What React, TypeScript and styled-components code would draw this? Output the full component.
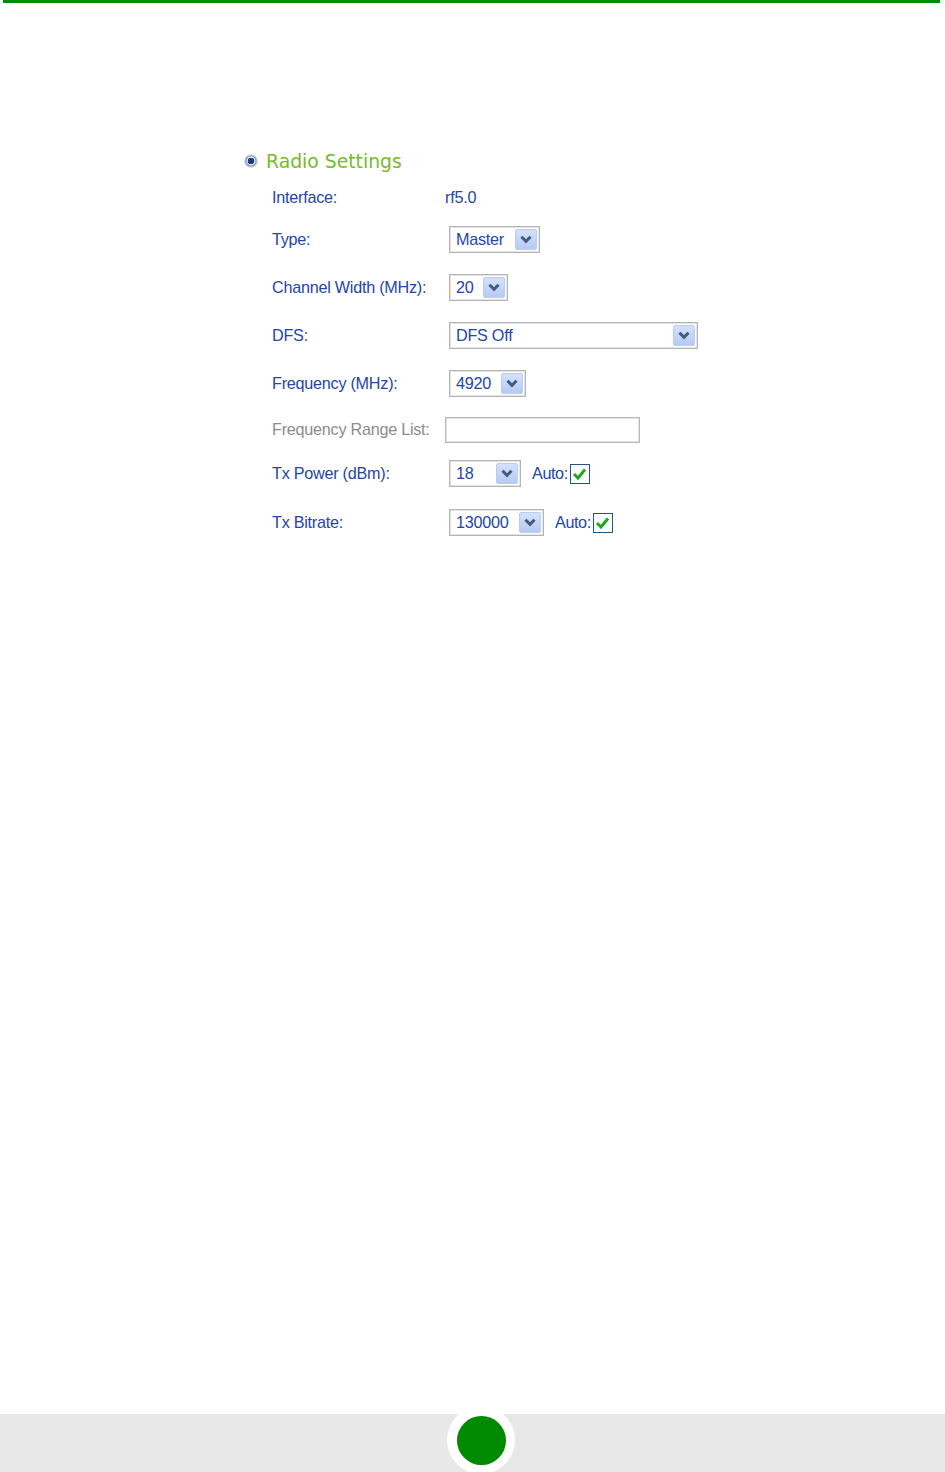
import React from 'react';
import styled, { createGlobalStyle } from 'styled-components';

const GlobalStyle = createGlobalStyle`
  html, body {
    margin: 0;
    padding: 0;
    background: #ffffff;
  }
  body {
    font-family: 'Liberation Sans', Arial, sans-serif;
  }
`;

const Page = styled.div`
  position: relative;
  width: 945px;
  height: 1472px;
  display: flex;
  flex-direction: column;
  overflow: hidden;
`;

const TopRule = styled.div`
  height: 3px;
  margin: 0 5px 0 3px;
  background: #008a00;
`;

const Content = styled.div`
  flex: 1;
  padding: 147px 0 0 244px;
`;

const Heading = styled.div`
  display: flex;
  align-items: center;
  gap: 8px;
  height: 22px;
  font-family: 'DejaVu Sans', Verdana, sans-serif;
  font-size: 18.8px;
  color: #76bb2c;
`;

const Form = styled.div`
  display: flex;
  flex-direction: column;
  padding-left: 28px;
`;

const Row = styled.div<{ $top: number }>`
  display: flex;
  align-items: center;
  height: 27px;
  margin-top: ${({ $top }) => $top}px;
`;

const Label = styled.div<{ $muted?: boolean }>`
  width: 173px;
  flex: none;
  font-size: 16.2px;
  letter-spacing: -0.25px;
  color: ${({ $muted }) => ($muted ? '#8c8c8c' : '#2546a8')};
  white-space: nowrap;
`;

const Value = styled.div`
  font-size: 16.2px;
  letter-spacing: -0.25px;
  color: #2546a8;
`;

const SelectBox = styled.div<{ $width: number }>`
  box-sizing: border-box;
  width: ${({ $width }) => $width}px;
  height: 27px;
  margin-left: 4px;
  display: flex;
  align-items: center;
  justify-content: space-between;
  border: 1px solid #b4b4b4;
  box-shadow: inset 0 0 0 1px #e4e4e4;
  background: #ffffff;
  padding: 0 2px 0 6px;
  font-size: 16.2px;
  letter-spacing: -0.25px;
  color: #2546a8;
`;

const ArrowButton = styled.div`
  width: 22px;
  height: 21px;
  box-sizing: border-box;
  border: 1px solid #b9cdf0;
  border-radius: 2px;
  background: linear-gradient(#d3e1fb, #b6cbf3);
  display: flex;
  align-items: center;
  justify-content: center;
`;

const TextInput = styled.div`
  box-sizing: border-box;
  width: 195px;
  height: 26px;
  border: 1px solid #b8b8b8;
  box-shadow: inset 0 0 0 1px #e2e2e2;
  background: #ffffff;
`;

const AutoLabel = styled.span`
  margin-left: 11px;
  font-size: 16.2px;
  letter-spacing: -0.4px;
  color: #2546a8;
`;

const CheckBox = styled.div`
  box-sizing: border-box;
  width: 20px;
  height: 20px;
  margin-left: 2px;
  border: 1px solid #1f5686;
  background: #ffffff;
  display: flex;
  align-items: center;
  justify-content: center;
`;

const Footer = styled.div`
  position: relative;
  height: 58px;
  background: #e8e8e8;
`;

const Badge = styled.div`
  position: absolute;
  left: 447px;
  top: -8px;
  width: 68px;
  height: 68px;
  border-radius: 50%;
  background: #ffffff;
  display: flex;
  align-items: center;
  justify-content: center;
`;

const BadgeDot = styled.div`
  width: 49px;
  height: 49px;
  border-radius: 50%;
  background: #008a00;
`;

const RadioIcon = () => (
  <svg width="14" height="14" viewBox="0 0 14 14">
    <circle cx="7" cy="7" r="6.8" fill="#c5d0e4" />
    <circle cx="7" cy="7" r="5.6" fill="#8497bb" />
    <circle cx="7" cy="7" r="4.4" fill="#ffffff" />
    <circle cx="7" cy="7" r="3.3" fill="#1d3c7c" />
  </svg>
);

const Chevron = () => (
  <svg width="12" height="9" viewBox="0 0 12 9">
    <path d="M1.5 1.8 L6 6.3 L10.5 1.8" fill="none" stroke="#45597f" strokeWidth="3" />
  </svg>
);

const Check = () => (
  <svg width="15" height="14" viewBox="0 0 15 14">
    <path d="M2 7 L6 11 L13 2.5" fill="none" stroke="#22a622" strokeWidth="3" />
  </svg>
);

const Select = ({ value, width }: { value: string; width: number }) => (
  <SelectBox $width={width}>
    <span>{value}</span>
    <ArrowButton>
      <Chevron />
    </ArrowButton>
  </SelectBox>
);

const Auto = () => (
  <>
    <AutoLabel>Auto:</AutoLabel>
    <CheckBox>
      <Check />
    </CheckBox>
  </>
);

export default function App() {
  return (
    <Page>
      <GlobalStyle />
      <TopRule />
      <Content>
        <Heading>
          <RadioIcon />
          <span>Radio Settings</span>
        </Heading>
        <Form>
          <Row $top={12}>
            <Label>Interface:</Label>
            <Value>rf5.0</Value>
          </Row>
          <Row $top={15}>
            <Label>Type:</Label>
            <Select value="Master" width={91} />
          </Row>
          <Row $top={21}>
            <Label>Channel Width (MHz):</Label>
            <Select value="20" width={59} />
          </Row>
          <Row $top={21}>
            <Label>DFS:</Label>
            <Select value="DFS Off" width={249} />
          </Row>
          <Row $top={21}>
            <Label>Frequency (MHz):</Label>
            <Select value="4920" width={77} />
          </Row>
          <Row $top={19}>
            <Label $muted>Frequency Range List:</Label>
            <TextInput />
          </Row>
          <Row $top={17}>
            <Label>Tx Power (dBm):</Label>
            <Select value="18" width={72} />
            <Auto />
          </Row>
          <Row $top={22}>
            <Label>Tx Bitrate:</Label>
            <Select value="130000" width={95} />
            <Auto />
          </Row>
        </Form>
      </Content>
      <Footer>
        <Badge>
          <BadgeDot />
        </Badge>
      </Footer>
    </Page>
  );
}
